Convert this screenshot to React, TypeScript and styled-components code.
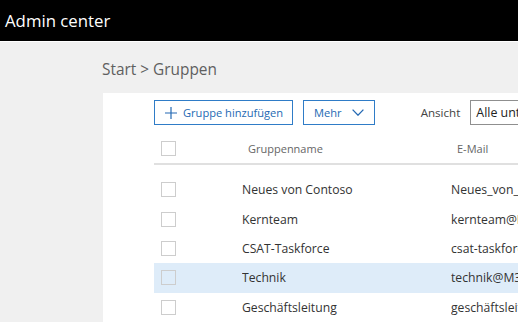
import React from 'react';
import styled, { createGlobalStyle } from 'styled-components';

const GlobalStyle = createGlobalStyle`
  html, body {
    margin: 0;
    padding: 0;
    background: #f0f0f0;
    font-family: 'Open Sans', 'Noto Sans', sans-serif;
    overflow: hidden;
  }
`;

const TopBar = styled.header`
  height: 41px;
  background: #000;
  border-bottom: 1px solid #fff;
  display: flex;
  align-items: center;
  padding-left: 5px;
  color: #fff;
  font-size: 16.8px;
`;

const Main = styled.main`
  padding-left: 102px;
`;

const Breadcrumb = styled.div`
  height: 51px;
  display: flex;
  align-items: center;
  padding-top: 4px;
  box-sizing: border-box;
  font-size: 15.4px;
  color: #5f5f5f;
`;

const Panel = styled.section`
  background: #fff;
  margin-left: 1px;
  width: 600px;
  min-height: 240px;
  padding: 7px 0 0 51px;
`;

const Toolbar = styled.div`
  display: flex;
  align-items: center;
  height: 25px;
`;

const OutlineButton = styled.button<{ $gap: number; $left: number; $right: number }>`
  height: 25px;
  flex-shrink: 0;
  display: flex;
  align-items: center;
  gap: ${(p) => p.$gap}px;
  padding: 0 ${(p) => p.$right}px 0 ${(p) => p.$left}px;
  margin-right: 10px;
  background: #fff;
  border: 1px solid #2f7cc7;
  color: #2469b3;
  font-family: inherit;
  font-size: 11.1px;
  white-space: nowrap;
`;

const ViewLabel = styled.span`
  margin-left: 36px;
  margin-right: 10px;
  font-size: 11.6px;
  color: #444;
  white-space: nowrap;
`;

const SelectBox = styled.div`
  height: 25px;
  width: 160px;
  flex-shrink: 0;
  border: 1px solid #8f8f8f;
  box-sizing: border-box;
  display: flex;
  align-items: center;
  padding-left: 5px;
  font-size: 12.4px;
  color: #222;
  white-space: nowrap;
`;

const Table = styled.div`
  margin-top: 8px;
  width: 420px;
`;

const HeadRow = styled.div`
  display: grid;
  grid-template-columns: 94px 209px 1fr;
  align-items: center;
  height: 30px;
  border-bottom: 2px solid #e0e0e0;
  margin-bottom: 10px;
  font-size: 11px;
  color: #666;
`;

const Row = styled.div<{ $selected?: boolean }>`
  display: grid;
  grid-template-columns: 88px 209px 1fr;
  align-items: center;
  height: 29.4px;
  background: ${(p) => (p.$selected ? '#deecf9' : 'transparent')};
  font-size: 12.2px;
  color: #333;
  white-space: nowrap;
`;

const Check = styled.span`
  display: block;
  width: 15px;
  height: 15px;
  box-sizing: border-box;
  border: 1px solid #cdcdcd;
  margin-left: 7px;
`;

const Cell = styled.span`
  overflow: hidden;
`;

const groups = [
  { name: 'Neues von Contoso', mail: 'Neues_von_Contoso@M365x.onmicrosoft.com' },
  { name: 'Kernteam', mail: 'kernteam@M365x.onmicrosoft.com' },
  { name: 'CSAT-Taskforce', mail: 'csat-taskforce@M365x.onmicrosoft.com' },
  { name: 'Technik', mail: 'technik@M365x.onmicrosoft.com', selected: true },
  { name: 'Geschäftsleitung', mail: 'geschäftsleitung@M365x.onmicrosoft.com' },
];

const App = () => {
  return (
    <>
      <GlobalStyle />
      <TopBar>Admin center</TopBar>
      <Main>
        <Breadcrumb>Start &gt; Gruppen</Breadcrumb>
        <Panel>
          <Toolbar>
            <OutlineButton $gap={6} $left={10} $right={9}>
              <svg width='12' height='12' viewBox='0 0 12 12'>
                <path d='M6 0V12M0 6H12' stroke='#2469b3' strokeWidth='1.2' fill='none' />
              </svg>
              Gruppe hinzufügen
            </OutlineButton>
            <OutlineButton $gap={10} $left={10} $right={10}>
              Mehr
              <svg width='12' height='7' viewBox='0 0 12 7'>
                <path d='M0.6 0.6L6 6.2L11.4 0.6' stroke='#2469b3' strokeWidth='1.3' fill='none' />
              </svg>
            </OutlineButton>
            <ViewLabel>Ansicht</ViewLabel>
            <SelectBox>Alle unterstützten Gruppen</SelectBox>
          </Toolbar>
          <Table>
            <HeadRow>
              <Check />
              <span>Gruppenname</span>
              <span>E-Mail</span>
            </HeadRow>
            {groups.map((g) => (
              <Row key={g.name} $selected={g.selected}>
                <Check />
                <Cell>{g.name}</Cell>
                <Cell>{g.mail}</Cell>
              </Row>
            ))}
          </Table>
        </Panel>
      </Main>
    </>
  );
};

export default App;
